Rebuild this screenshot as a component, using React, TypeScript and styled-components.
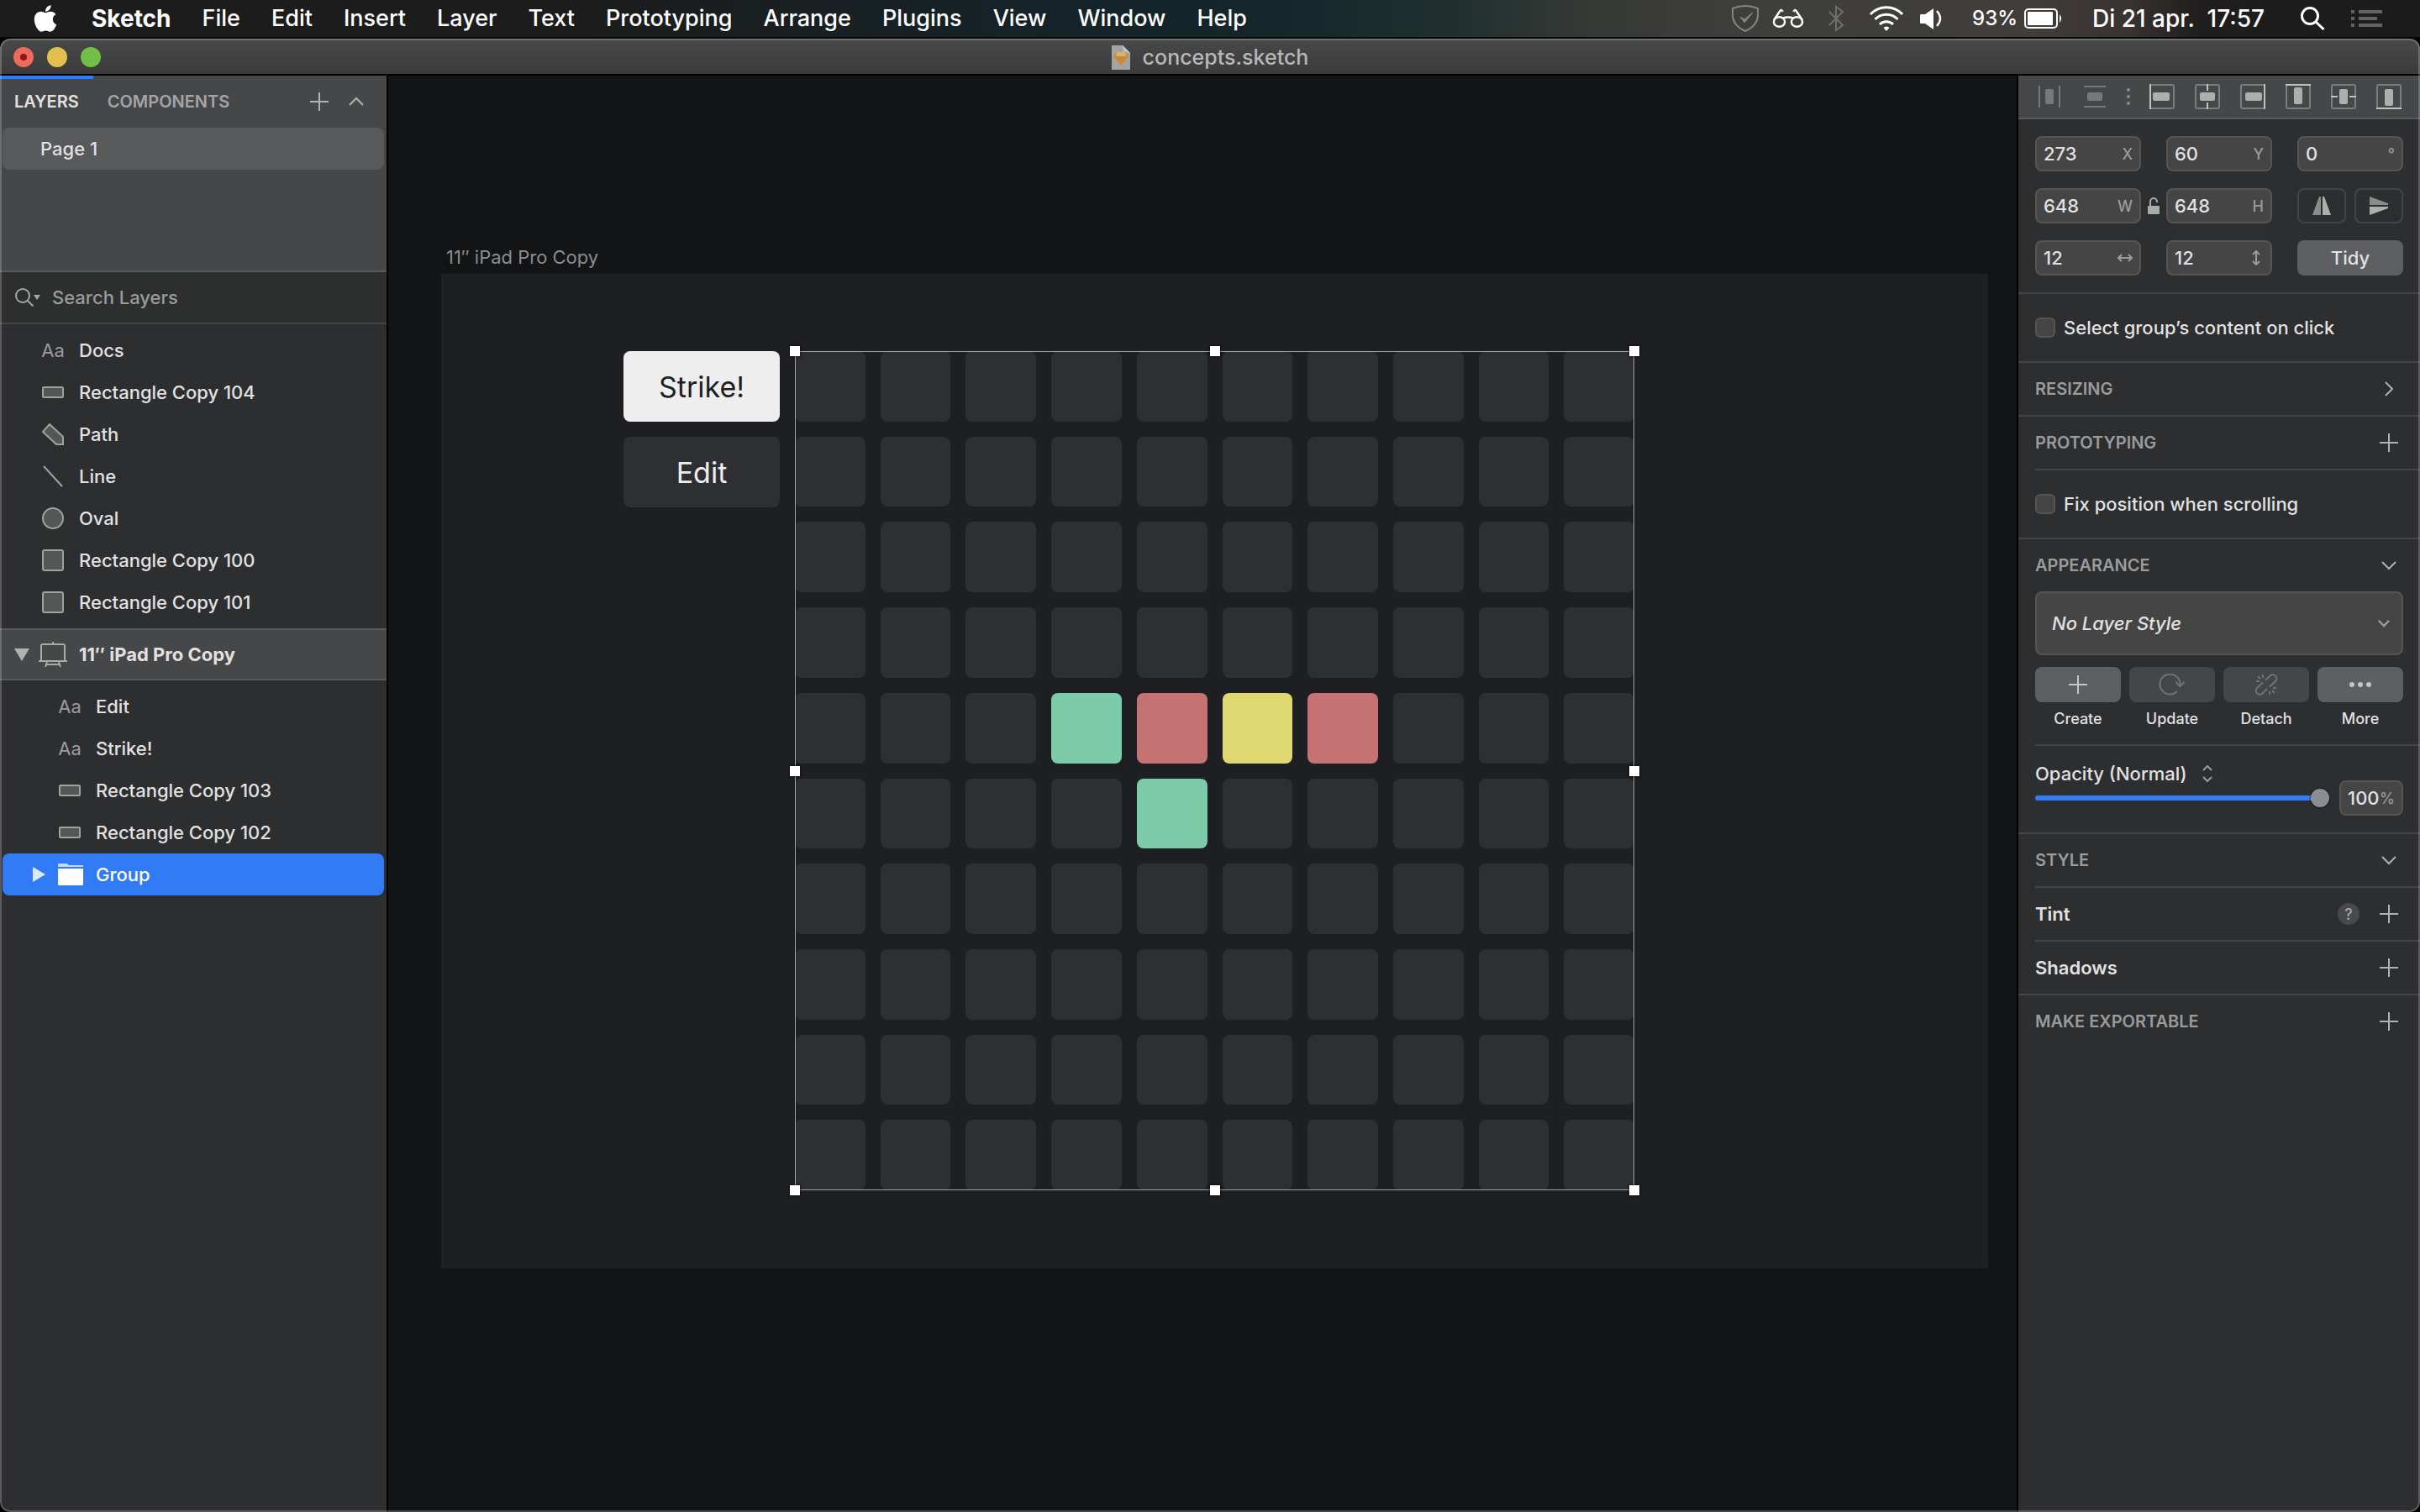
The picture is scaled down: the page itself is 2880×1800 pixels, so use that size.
import React from 'react';
import styled, { createGlobalStyle, css } from 'styled-components';
import { FaApple } from 'react-icons/fa';

const color = {
  bar: '#464748',
  panel: '#2d2e30',
  canvas: '#131416',
  artboard: '#1e1f23',
  cell: '#2e2f33',
  field: '#454546',
  fieldLine: '#545556',
  line: '#434446',
  strongLine: '#58595b',
  raised: '#5e5f62',
  text: '#e1e1e2',
  muted: '#9a9b9c',
  blue: '#327bf6',
};

const GlobalStyle = createGlobalStyle`
  *, *::before, *::after { box-sizing: border-box; }
  body { margin: 0; background: #000; }
  body, button, input, select {
    font-family: Inter, "Liberation Sans", sans-serif;
    font-size: 22px;
    font-weight: 500;
    color: ${color.text};
  }
  button, input, select { margin: 0; padding: 0; border: 0; background: none; outline: none; }
  svg { display: block; flex: none; }
  ul { list-style: none; margin: 0; padding: 0; }
  h1, h2 { margin: 0; font-size: inherit; font-weight: inherit; }
`;

const Screen = styled.div`
  display: flex;
  flex-direction: column;
  min-height: 100vh;
`;

/* ---------- menu bar ---------- */

const MenuBar = styled.header`
  display: flex;
  align-items: center;
  height: 46px;
  padding: 0 45px 0 36px;
  border-bottom: 2px solid #050606;
  background: linear-gradient(
    90deg,
    #1c1c1c 0%, #1c1c1c 24%, #14242a 46%, #14272b 53%, #20302f 60%,
    #373936 66%, #3e3f3c 72%, #413d3a 84%, #383230 88%, #1f1d1d 91%, #1b1b1b 100%
  );
`;

const Menus = styled.nav`
  display: flex;
  align-items: center;
  gap: 37px;
`;

const MenuButton = styled.button<{ $strong?: boolean }>`
  font-size: ${(p) => (p.$strong ? 28 : 27)}px;
  line-height: 44px;
  font-weight: ${(p) => (p.$strong ? 700 : 500)};
  color: #fff;
`;

const Extras = styled.div`
  display: flex;
  align-items: center;
  margin-left: auto;
`;

const Extra = styled.button<{ $before: number; $size?: number }>`
  display: flex;
  align-items: center;
  gap: 8px;
  margin-left: ${(p) => p.$before}px;
  font-size: ${(p) => p.$size ?? 24}px;
  line-height: 44px;
  white-space: pre;
  color: #fff;
`;

/* ---------- window frame ---------- */

const Window = styled.div`
  position: relative;
  flex: 1;
  display: flex;
  flex-direction: column;
  border-radius: 12px;
  overflow: hidden;
  &::after {
    content: '';
    position: absolute;
    inset: 0;
    border-radius: 12px;
    box-shadow: inset 0 0 0 2px rgba(255, 255, 255, 0.22);
    pointer-events: none;
  }
`;

const TitleBar = styled.div`
  display: grid;
  grid-template-columns: 1fr auto 1fr;
  align-items: center;
  height: 44px;
  padding: 2px 16px 0;
  background: linear-gradient(#484a49, #3a3b3a);
  border-bottom: 2px solid #000;
`;

const Lights = styled.div`
  display: flex;
  gap: 16px;
`;

const Light = styled.button<{ $tone: string }>`
  display: grid;
  place-items: center;
  width: 24px;
  height: 24px;
  border-radius: 50%;
  background: ${(p) => p.$tone};
`;

const UnsavedDot = styled.span`
  width: 8px;
  height: 8px;
  border-radius: 50%;
  background: #8b1a10;
`;

const DocumentTitle = styled.h1`
  display: flex;
  align-items: center;
  gap: 14px;
  font-size: 25px;
  color: #b7b8b7;
`;

const Body = styled.div`
  flex: 1;
  display: grid;
  grid-template-columns: 462px minmax(0, 1fr) 480px;
`;

/* ---------- sidebar ---------- */

const Sidebar = styled.aside`
  background: ${color.panel};
  border-right: 2px solid #000;
`;

const Pages = styled.section`
  min-height: 234px;
  background: ${color.bar};
  border-bottom: 2px solid ${color.strongLine};
`;

const TabRow = styled.div`
  display: flex;
  align-items: center;
  height: 62px;
  padding-right: 19px;
`;

const Tab = styled.button<{ $active?: boolean }>`
  height: 62px;
  padding: 0 17px;
  font-size: 20px;
  font-weight: 600;
  color: ${(p) => (p.$active ? color.text : '#a3a4a5')};
  ${(p) => p.$active && css`box-shadow: inset 0 4px ${color.blue};`}
`;

const TabActions = styled.div`
  display: flex;
  margin-left: auto;
`;

const IconButton = styled.button`
  display: grid;
  place-items: center;
  width: 34px;
  height: 34px;
  color: #b0b1b2;
`;

const TabIcon = styled(IconButton)`
  width: 44px;
  &:last-child { width: 34px; margin-left: 5px; }
`;

const PageRow = styled.button`
  display: block;
  width: calc(100% - 6px);
  height: 50px;
  margin: 0 3px;
  padding-left: 45px;
  border-radius: 8px;
  background: #58595b;
  text-align: left;
`;

const SearchRow = styled.label`
  display: flex;
  align-items: center;
  gap: 14px;
  height: 62px;
  padding: 0 18px;
  background: #2d2e2e;
  border-bottom: 2px solid ${color.line};
  color: ${color.muted};
`;

const SearchInput = styled.input`
  flex: 1;
  min-width: 0;
  &::placeholder { color: ${color.muted}; opacity: 1; }
`;

const LayerList = styled.ul`
  padding: 6px 0;
`;

const LayerRow = styled.button<{ $depth: number; $selected?: boolean }>`
  display: flex;
  align-items: center;
  gap: 15px;
  width: calc(100% - 6px);
  height: 50px;
  margin: 0 3px;
  padding-left: ${(p) => 14 + p.$depth * 20}px;
  border-radius: 8px;
  text-align: left;
  ${(p) => p.$selected && css`background: ${color.blue}; color: #fff;`}
`;

const ArtboardRow = styled.button`
  display: flex;
  align-items: center;
  width: 100%;
  height: 62px;
  padding-left: 17px;
  gap: 11px;
  font-weight: 700;
  text-align: left;
  background: ${color.bar};
  border-top: 2px solid ${color.strongLine};
  border-bottom: 2px solid ${color.strongLine};
`;

const ArtboardName = styled.span`
  padding-left: 3px;
`;

const Disclosure = styled.span`
  display: flex;
  justify-content: flex-end;
  width: 17px;
`;

const Glyph = styled.span`
  display: grid;
  place-items: center;
  width: 28px;
  margin-right: 2px;
  color: ${color.muted};
  font-size: 22px;
  font-weight: 400;
`;

/* ---------- canvas ---------- */

const Canvas = styled.main`
  padding: 202px 34px 0 63px;
  background: ${color.canvas};
`;

const ArtboardLabel = styled.h2`
  padding-left: 6px;
  line-height: 28px;
  margin-bottom: 6px;
  font-weight: 400;
  color: #8c8d8e;
`;

const Artboard = styled.section`
  display: grid;
  grid-template-columns: 186px 999px;
  align-items: start;
  gap: 18px;
  padding: 92px 0 93px 217px;
  background: ${color.artboard};
`;

const MockButtons = styled.div`
  display: grid;
  gap: 18px;
`;

const MockButton = styled.button<{ $light?: boolean }>`
  height: 84px;
  border-radius: 8px;
  font-size: 34px;
  font-weight: 400;
  background: ${(p) => (p.$light ? '#eeeeee' : color.cell)};
  color: ${(p) => (p.$light ? color.artboard : '#eeeeee')};
`;

const Group = styled.div`
  position: relative;
`;

const CellGrid = styled.div`
  display: grid;
  grid-template-columns: repeat(10, 1fr);
  gap: 18px;
`;

const Cell = styled.div<{ $tone?: string }>`
  aspect-ratio: 1;
  border-radius: 8px;
  background: ${(p) => p.$tone ?? color.cell};
`;

const Selection = styled.div`
  position: absolute;
  inset: 0;
  box-shadow: inset 0 0 0 1px #a2a3a4;
`;

const Handle = styled.span<{ $x: number; $y: number }>`
  position: absolute;
  left: ${(p) => p.$x}%;
  top: ${(p) => p.$y}%;
  width: 12px;
  height: 12px;
  margin: -6px;
  background: #fff;
  box-shadow: 0 0 2px 1px rgba(0, 0, 0, 0.5);
`;

/* ---------- inspector ---------- */

const Inspector = styled.aside`
  background: ${color.panel};
  border-left: 2px solid #000;
`;

const AlignBar = styled.div`
  display: flex;
  align-items: center;
  gap: 24px;
  height: 52px;
  padding: 0 22px;
  background: ${color.bar};
  border-bottom: 2px solid ${color.strongLine};
`;

const AlignButton = styled.button`
  flex: none;
  width: 30px;
  height: 30px;
`;

const AlignDots = styled.span`
  flex: none;
  width: 4px;
  margin: 0 -1px;
`;

const Section = styled.section<{ $pad?: string }>`
  padding: ${(p) => p.$pad ?? '0'};
  border-bottom: 2px solid ${color.line};
`;

const Inset = styled.div<{ $pad?: string }>`
  margin-left: 20px;
  padding: ${(p) => p.$pad ?? '0'};
  border-bottom: 2px solid ${color.line};
`;

const Geometry = styled.div`
  display: grid;
  grid-template-columns: 1fr 30px 1fr 30px 1fr;
  row-gap: 20px;
`;

const fieldBox = css`
  height: 42px;
  border-radius: 8px;
  border: 2px solid ${color.fieldLine};
  background: ${color.field};
`;

const Field = styled.label<{ $col?: number }>`
  ${fieldBox}
  display: flex;
  align-items: center;
  padding: 0 8px;
  ${(p) => p.$col && css`grid-column: ${p.$col};`}
`;

const FieldInput = styled.input`
  flex: 1;
  width: 100%;
  min-width: 0;
`;

const Unit = styled.span`
  font-size: 18px;
  color: ${color.muted};
`;

const LockButton = styled.button`
  display: grid;
  place-items: center;
`;

const Pair = styled.div`
  display: grid;
  grid-column: 5;
  grid-template-columns: 1fr 1fr;
  gap: 10px;
`;

const OutlineButton = styled.button`
  display: grid;
  place-items: center;
  height: 42px;
  border: 2px solid ${color.line};
  border-radius: 8px;
`;

const SolidButton = styled.button`
  display: grid;
  place-items: center;
  width: 100%;
  height: 42px;
  border-radius: 8px;
  background: ${color.raised};
  color: #c4c5c6;
  &:disabled { background: #454648; color: #727374; }
`;

const TidyButton = styled(SolidButton)`
  grid-column: 5;
  color: ${color.text};
`;

const CheckLabel = styled.label`
  display: flex;
  align-items: center;
  gap: 10px;
  height: 80px;
  padding-left: 20px;
`;

const CheckBox = styled.input`
  appearance: none;
  width: 24px;
  height: 24px;
  border: 2px solid ${color.fieldLine};
  border-radius: 6px;
  background: ${color.field};
`;

const Row = styled.div<{ $flush?: boolean }>`
  display: flex;
  align-items: center;
  gap: 18px;
  height: 62px;
  padding: 0 20px 0 ${(p) => (p.$flush ? 0 : 20)}px;
`;

const Caption = styled.h2`
  flex: 1;
  font-size: 20px;
  font-weight: 600;
  color: ${color.muted};
`;

const RowName = styled.h2`
  flex: 1;
  font-size: 22px;
  font-weight: 600;
`;

const HelpButton = styled.button`
  display: grid;
  place-items: center;
  width: 26px;
  height: 26px;
  border-radius: 50%;
  background: #48494b;
  font-size: 18px;
  color: #a8a9aa;
`;

const StyleBox = styled.div`
  display: grid;
  align-items: center;
  margin: 0 20px 14px;
  color: ${color.muted};
  & > * { grid-area: 1 / 1; }
  & > svg { justify-self: end; margin-right: 16px; pointer-events: none; }
`;

const StyleSelect = styled.select`
  ${fieldBox}
  appearance: none;
  height: 76px;
  padding-left: 18px;
  font-style: italic;
`;

const Actions = styled.div`
  display: grid;
  grid-template-columns: repeat(4, 1fr);
  gap: 10px;
`;

const Action = styled.label`
  display: grid;
  justify-items: center;
  gap: 8px;
  font-size: 18px;
  line-height: 24px;
`;

const OpacityRow = styled.div`
  display: grid;
  grid-template-columns: 1fr 76px;
  gap: 12px;
  align-items: end;
  padding: 18px 20px 20px;
`;

const BlendPicker = styled.div`
  display: flex;
  align-items: center;
  gap: 18px;
  color: ${color.muted};
`;

const BlendSelect = styled.select`
  appearance: none;
  line-height: 30px;
`;

const Slider = styled.input`
  appearance: none;
  display: block;
  width: 100%;
  height: 22px;
  margin: 3px 0 10px;
  &::-webkit-slider-runnable-track {
    height: 6px;
    border-radius: 3px;
    background: ${color.blue};
  }
  &::-webkit-slider-thumb {
    appearance: none;
    width: 22px;
    height: 22px;
    margin-top: -8px;
    border-radius: 50%;
    background: #8b8d93;
    box-shadow: 0 0 2px 1px rgba(0, 0, 0, 0.4);
  }
`;

/* ---------- icons ---------- */

const Plus = () => (
  <svg width="22" height="22" viewBox="0 0 22 22" stroke="currentColor" strokeWidth="2">
    <path d="M11 0V22M0 11H22" />
  </svg>
);

const Chevron = ({ turn = 0, size = 18 }: { turn?: number; size?: number }) => (
  <svg width={size} height={size} viewBox="0 0 18 18" fill="none" stroke="currentColor" strokeWidth={size < 18 ? 3 : 2}>
    <path d="M1 5L9 13L17 5" transform={`rotate(${turn} 9 9)`} />
  </svg>
);

const shapeProps = { width: 26, height: 26, viewBox: '0 0 26 26', fill: '#555658', stroke: '#a0a1a1', strokeWidth: 2 };

const shapes: Record<string, React.ReactNode> = {
  text: 'Aa',
  bar: <svg {...shapeProps}><rect x="1" y="7" width="24" height="12" rx="1" /></svg>,
  path: <svg {...shapeProps}><path d="M9 1L1 10L17 25H25V16Z" /></svg>,
  line: <svg {...shapeProps}><path d="M2 1L24 25" /></svg>,
  oval: <svg {...shapeProps}><circle cx="13" cy="13" r="12" /></svg>,
  square: <svg {...shapeProps}><rect x="1" y="1" width="24" height="24" rx="2" /></svg>,
  folder: (
    <svg width="30" height="26" viewBox="0 0 30 26">
      <path d="M0 4V1Q0 0 1 0H11L13 2H29Q30 2 30 3V4Z" fill="#c3d9fd" />
      <path d="M0 6H30V25Q30 26 29 26H1Q0 26 0 25Z" fill="#fff" />
    </svg>
  ),
};

type Block = [number, number, number, number];

const Frame = ({ edge, block }: { edge: string; block: Block }) => (
  <svg width="30" height="30" viewBox="0 0 30 30" fill="none" strokeWidth="2">
    <rect x="1" y="1" width="28" height="28" rx="2" stroke="#7c7d7e" />
    <path d={edge} stroke="#c0c1c1" />
    <rect x={block[0]} y={block[1]} width={block[2]} height={block[3]} rx="2" fill="#adaeae" />
  </svg>
);

const Spread = ({ edge, block }: { edge: string; block: Block }) => (
  <svg width="30" height="30" viewBox="0 0 30 30" fill="none" strokeWidth="2">
    <path d={edge} stroke="#777879" />
    <rect x={block[0]} y={block[1]} width={block[2]} height={block[3]} rx="2" fill="#777879" />
  </svg>
);

const ArrowPair = ({ upright }: { upright?: boolean }) => (
  <svg width="18" height="18" viewBox="0 0 18 18" fill="none" stroke={color.muted} strokeWidth="2">
    <path d="M1 9H17M5 5L1 9L5 13M13 5L17 9L13 13" transform={upright ? 'rotate(90 9 9)' : undefined} />
  </svg>
);

/* ---------- data ---------- */

type Layer = { name: string; kind: string };

const menus = ['Sketch', 'File', 'Edit', 'Insert', 'Layer', 'Text', 'Prototyping', 'Arrange', 'Plugins', 'View', 'Window', 'Help'];

const looseLayers: Layer[] = [
  { name: 'Docs', kind: 'text' },
  { name: 'Rectangle Copy 104', kind: 'bar' },
  { name: 'Path', kind: 'path' },
  { name: 'Line', kind: 'line' },
  { name: 'Oval', kind: 'oval' },
  { name: 'Rectangle Copy 100', kind: 'square' },
  { name: 'Rectangle Copy 101', kind: 'square' },
];

const artboardLayers: Layer[] = [
  { name: 'Edit', kind: 'text' },
  { name: 'Strike!', kind: 'text' },
  { name: 'Rectangle Copy 103', kind: 'bar' },
  { name: 'Rectangle Copy 102', kind: 'bar' },
  { name: 'Group', kind: 'folder' },
];

const green = '#7ecba9';
const red = '#c67172';
const yellow = '#dfd870';
const tones: Record<number, string> = { 43: green, 44: red, 45: yellow, 46: red, 54: green };

const handles = [[0, 0], [50, 0], [100, 0], [0, 50], [100, 50], [0, 100], [50, 100], [100, 100]];

const Layers = ({ items, depth }: { items: Layer[]; depth: number }) => (
  <LayerList>
    {items.map((item) => {
      const selected = item.kind === 'folder';
      return (
        <li key={item.name}>
          <LayerRow $depth={depth} $selected={selected}>
            <Disclosure>
              {selected && (
                <svg width="15" height="18" viewBox="0 0 15 18"><path d="M0 0L15 9L0 18Z" fill="#dbe8fe" /></svg>
              )}
            </Disclosure>
            <Glyph>{shapes[item.kind]}</Glyph>
            {item.name}
          </LayerRow>
        </li>
      );
    })}
  </LayerList>
);

const StatusIcons = () => (
  <Extras>
    <Extra $before={0} aria-label="Protection">
      <svg width="32" height="32" viewBox="0 0 32 32" fill="none" stroke="#85847d" strokeWidth="2">
        <path d="M1 4Q16 -2 31 4V13Q30 25 16 31Q2 25 1 13Z" />
        <path d="M10 14L15 21L25 9L15 17Z" fill="#85847d" strokeWidth="1" />
      </svg>
    </Extra>
    <Extra $before={16} aria-label="Reader">
      <svg width="38" height="24" viewBox="0 0 38 24" fill="none" stroke="#fff" strokeWidth="2.4">
        <ellipse cx="8.5" cy="16" rx="6.6" ry="5.8" />
        <ellipse cx="29.5" cy="16" rx="6.6" ry="5.8" />
        <path d="M2 14L9 3.5Q11 0 12.5 4M36 14L29 3.5Q27 0 25.5 4M13 11.5Q19 9.5 25 11.5" />
      </svg>
    </Extra>
    <Extra $before={29} aria-label="Bluetooth">
      <svg width="18" height="32" viewBox="0 0 18 32" fill="none" stroke="#6f6e6b" strokeWidth="2">
        <path d="M1 8L17 24L9 30V2L17 8L1 24" />
      </svg>
    </Extra>
    <Extra $before={30} aria-label="Wi-Fi">
      <svg width="42" height="32" viewBox="0 0 42 32" fill="none" stroke="#fff" strokeWidth="3">
        <path d="M2 11A26 26 0 0 1 40 11M7.5 17A19 19 0 0 1 34.5 17M13 23A11.5 11.5 0 0 1 29 23" />
        <path d="M17.5 27Q21 24 24.5 27L21 31Z" fill="#fff" stroke="none" />
      </svg>
    </Extra>
    <Extra $before={19} aria-label="Volume">
      <svg width="26" height="26" viewBox="0 0 26 26">
        <path d="M1 8Q0 8 0 9V18Q0 19 1 19H6L16 26V1L6 8Z" fill="#fff" />
        <path d="M20 4Q28 13 20 22" fill="none" stroke="#fff" strokeWidth="2.4" />
      </svg>
    </Extra>
    <Extra $before={36} aria-label="Battery 93%">
      93%
      <svg width="46" height="24" viewBox="0 0 46 24">
        <rect x="1" y="1" width="38" height="22" rx="4" fill="none" stroke="#fff" strokeWidth="2" />
        <rect x="4" y="4" width="30" height="16" rx="1" fill="#fff" />
        <path d="M42 7Q46 12 42 17Z" fill="#fff" />
      </svg>
    </Extra>
    <Extra $before={35} $size={28}>{'Di 21 apr.  17:57'}</Extra>
    <Extra $before={43} aria-label="Spotlight">
      <svg width="29" height="28" viewBox="0 0 29 28" fill="none" stroke="#fff" strokeWidth="3">
        <circle cx="11" cy="11" r="9.5" />
        <path d="M17.5 17.5L27.5 27" />
      </svg>
    </Extra>
    <Extra $before={31} aria-label="Notifications">
      <svg width="37" height="20" viewBox="0 0 37 20" fill="#626262">
        <path d="M0 0H4V4H0ZM9 0H37V4H9ZM0 8H4V12H0ZM9 8H31V12H9ZM0 16H4V20H0ZM9 16H37V20H9Z" />
      </svg>
    </Extra>
  </Extras>
);

export default function App() {
  return (
    <Screen>
      <GlobalStyle />
      <MenuBar>
        <Menus>
          <MenuButton aria-label="Apple"><FaApple size={36} /></MenuButton>
          {menus.map((m, i) => <MenuButton key={m} $strong={i === 0}>{m}</MenuButton>)}
        </Menus>
        <StatusIcons />
      </MenuBar>

      <Window>
        <TitleBar>
          <Lights>
            <Light $tone="#ed6a5f" aria-label="Close"><UnsavedDot /></Light>
            <Light $tone="#e0c04f" aria-label="Minimize" />
            <Light $tone="#72be47" aria-label="Zoom" />
          </Lights>
          <DocumentTitle>
            <svg width="23" height="30" viewBox="0 0 23 30">
              <path d="M0 1H13L22 10V30H0Z" fill="#a3a3a3" />
              <path d="M13 1L22 10L14 8Z" fill="#c6c6c6" />
              <path d="M6 9H16L20 14L11 25L2 14Z" fill="#c98a35" />
              <path d="M6 9H16L17 14H5Z" fill="#d9b46a" />
            </svg>
            concepts.sketch
          </DocumentTitle>
        </TitleBar>

        <Body>
          <Sidebar>
            <Pages>
              <TabRow>
                <Tab $active>LAYERS</Tab>
                <Tab>COMPONENTS</Tab>
                <TabActions>
                  <TabIcon aria-label="Add page"><Plus /></TabIcon>
                  <TabIcon aria-label="Collapse pages"><Chevron turn={180} /></TabIcon>
                </TabActions>
              </TabRow>
              <PageRow>Page 1</PageRow>
            </Pages>
            <SearchRow>
              <svg width="30" height="22" viewBox="0 0 30 22" fill="none" stroke="#a5a6a6" strokeWidth="2">
                <circle cx="9" cy="9" r="8" />
                <path d="M14.5 14.5L21.5 21.5" />
                <path d="M22 8H30L26 14Z" fill="#a5a6a6" stroke="none" />
              </svg>
              <SearchInput type="text" placeholder="Search Layers" aria-label="Search Layers" />
            </SearchRow>
            <Layers items={looseLayers} depth={0} />
            <ArtboardRow>
              <svg width="18" height="15" viewBox="0 0 18 15"><path d="M0 0H18L9 15Z" fill="#b1b2b2" /></svg>
              <svg width="34" height="30" viewBox="0 0 34 30" fill="none" stroke="#a9aaaa" strokeWidth="2">
                <path d="M17 0V3M3 23V5Q3 3 5 3H29Q31 3 31 5V23M0 23H34M10 24L8 30M24 24L26 30M9 27H25" />
              </svg>
              <ArtboardName>11″ iPad Pro Copy</ArtboardName>
            </ArtboardRow>
            <Layers items={artboardLayers} depth={1} />
          </Sidebar>

          <Canvas>
            <ArtboardLabel>11″ iPad Pro Copy</ArtboardLabel>
            <Artboard>
              <MockButtons>
                <MockButton $light>Strike!</MockButton>
                <MockButton>Edit</MockButton>
              </MockButtons>
              <Group>
                <CellGrid>
                  {Array.from({ length: 100 }, (_, i) => <Cell key={i} $tone={tones[i]} />)}
                </CellGrid>
                <Selection>
                  {handles.map(([x, y]) => <Handle key={`${x}-${y}`} $x={x} $y={y} />)}
                </Selection>
              </Group>
            </Artboard>
          </Canvas>

          <Inspector>
            <AlignBar>
              <AlignButton aria-label="Distribute horizontally"><Spread edge="M3 2V28M27 2V28" block={[10, 6, 10, 18]} /></AlignButton>
              <AlignButton aria-label="Distribute vertically"><Spread edge="M2 3H28M2 27H28" block={[6, 10, 18, 10]} /></AlignButton>
              <AlignDots>
                <svg width="4" height="20" viewBox="0 0 4 20" fill="#8a8b8b">
                  <circle cx="2" cy="2" r="2" /><circle cx="2" cy="10" r="2" /><circle cx="2" cy="18" r="2" />
                </svg>
              </AlignDots>
              <AlignButton aria-label="Align left"><Frame edge="M1 0V30" block={[4, 10, 20, 10]} /></AlignButton>
              <AlignButton aria-label="Align centre"><Frame edge="M15 0V8M15 22V30" block={[6, 10, 18, 10]} /></AlignButton>
              <AlignButton aria-label="Align right"><Frame edge="M29 0V30" block={[6, 10, 20, 10]} /></AlignButton>
              <AlignButton aria-label="Align top"><Frame edge="M0 1H30" block={[10, 4, 10, 20]} /></AlignButton>
              <AlignButton aria-label="Align middle"><Frame edge="M0 15H8M22 15H30" block={[10, 6, 10, 18]} /></AlignButton>
              <AlignButton aria-label="Align bottom"><Frame edge="M0 29H30" block={[10, 6, 10, 20]} /></AlignButton>
            </AlignBar>

            <Section $pad="20px">
              <Geometry>
                <Field $col={1}><FieldInput defaultValue="273" /><Unit>X</Unit></Field>
                <Field $col={3}><FieldInput defaultValue="60" /><Unit>Y</Unit></Field>
                <Field $col={5}><FieldInput defaultValue="0" aria-label="Rotation" /><Unit>°</Unit></Field>
                <Field><FieldInput defaultValue="648" /><Unit>W</Unit></Field>
                <LockButton aria-label="Constrain proportions">
                  <svg width="14" height="20" viewBox="0 0 14 20">
                    <path d="M3 11V5A4 4 0 0 1 11 5V6" fill="none" stroke="#a9aaaa" strokeWidth="2" />
                    <rect y="10" width="14" height="10" rx="1" fill="#a9aaaa" />
                  </svg>
                </LockButton>
                <Field><FieldInput defaultValue="648" /><Unit>H</Unit></Field>
                <Pair>
                  <OutlineButton aria-label="Flip horizontally">
                    <svg width="22" height="22" viewBox="0 0 22 22">
                      <path d="M10 0V22H0L8 0Z" fill="#8a8b8b" /><path d="M12 0V22H22L14 0Z" fill="#adaeae" />
                    </svg>
                  </OutlineButton>
                  <OutlineButton aria-label="Flip vertically">
                    <svg width="22" height="22" viewBox="0 0 22 22">
                      <path d="M0 0L22 8V10H0Z" fill="#8a8b8b" /><path d="M0 22L22 14V12H0Z" fill="#adaeae" />
                    </svg>
                  </OutlineButton>
                </Pair>
                <Field $col={1}><FieldInput defaultValue="12" aria-label="Horizontal spacing" /><ArrowPair /></Field>
                <Field $col={3}><FieldInput defaultValue="12" aria-label="Vertical spacing" /><ArrowPair upright /></Field>
                <TidyButton>Tidy</TidyButton>
              </Geometry>
            </Section>

            <Section><CheckLabel><CheckBox type="checkbox" />Select group’s content on click</CheckLabel></Section>

            <Section>
              <Row><Caption>RESIZING</Caption><IconButton aria-label="Show resizing"><Chevron turn={-90} /></IconButton></Row>
            </Section>

            <Section>
              <Inset>
                <Row $flush><Caption>PROTOTYPING</Caption><IconButton aria-label="Add link"><Plus /></IconButton></Row>
              </Inset>
              <CheckLabel><CheckBox type="checkbox" />Fix position when scrolling</CheckLabel>
            </Section>

            <Section>
              <Row><Caption>APPEARANCE</Caption><IconButton aria-label="Hide appearance"><Chevron /></IconButton></Row>
              <StyleBox>
                <StyleSelect aria-label="Layer style"><option>No Layer Style</option></StyleSelect>
                <Chevron size={14} />
              </StyleBox>
              <Inset $pad="0 20px 18px 0">
                <Actions>
                  <Action><SolidButton><Plus /></SolidButton>Create</Action>
                  <Action>
                    <SolidButton disabled>
                      <svg width="32" height="26" viewBox="0 0 32 26" fill="none" stroke="currentColor" strokeWidth="2">
                        <path d="M22 21A12 12 0 1 1 25.5 13M20.5 10L25.5 15L30.5 10" />
                      </svg>
                    </SolidButton>
                    Update
                  </Action>
                  <Action>
                    <SolidButton disabled>
                      <svg width="26" height="26" viewBox="0 0 26 26" fill="none" stroke="currentColor" strokeWidth="2">
                        <path d="M12 8L17.5 2.5A4.6 4.6 0 0 1 24 9L17 15.5M14 18L8.5 23.5A4.6 4.6 0 0 1 2 17L9 10.5" />
                        <path d="M3 3L6 6M9 1V5M1 9H5M23 23L20 20M17 25V21M25 17H21" />
                      </svg>
                    </SolidButton>
                    Detach
                  </Action>
                  <Action>
                    <SolidButton>
                      <svg width="26" height="6" viewBox="0 0 26 6" fill="currentColor">
                        <circle cx="3" cy="3" r="3" /><circle cx="13" cy="3" r="3" /><circle cx="23" cy="3" r="3" />
                      </svg>
                    </SolidButton>
                    More
                  </Action>
                </Actions>
              </Inset>
              <OpacityRow>
                <div>
                  <BlendPicker>
                    <BlendSelect aria-label="Blend mode"><option>Opacity (Normal)</option></BlendSelect>
                    <svg width="12" height="20" viewBox="0 0 12 20" fill="none" stroke="currentColor" strokeWidth="2">
                      <path d="M1 6L6 1L11 6M1 14L6 19L11 14" />
                    </svg>
                  </BlendPicker>
                  <Slider type="range" min="0" max="100" defaultValue="100" aria-label="Opacity" />
                </div>
                <Field><FieldInput defaultValue="100" /><Unit>%</Unit></Field>
              </OpacityRow>
            </Section>

            <Section>
              <Inset>
                <Row $flush><Caption>STYLE</Caption><IconButton aria-label="Hide style"><Chevron /></IconButton></Row>
              </Inset>
              <Inset>
                <Row $flush>
                  <RowName>Tint</RowName>
                  <HelpButton aria-label="About tint">?</HelpButton>
                  <IconButton aria-label="Add tint"><Plus /></IconButton>
                </Row>
              </Inset>
              <Row><RowName>Shadows</RowName><IconButton aria-label="Add shadow"><Plus /></IconButton></Row>
            </Section>

            <Row><Caption>MAKE EXPORTABLE</Caption><IconButton aria-label="Add export"><Plus /></IconButton></Row>
          </Inspector>
        </Body>
      </Window>
    </Screen>
  );
}
